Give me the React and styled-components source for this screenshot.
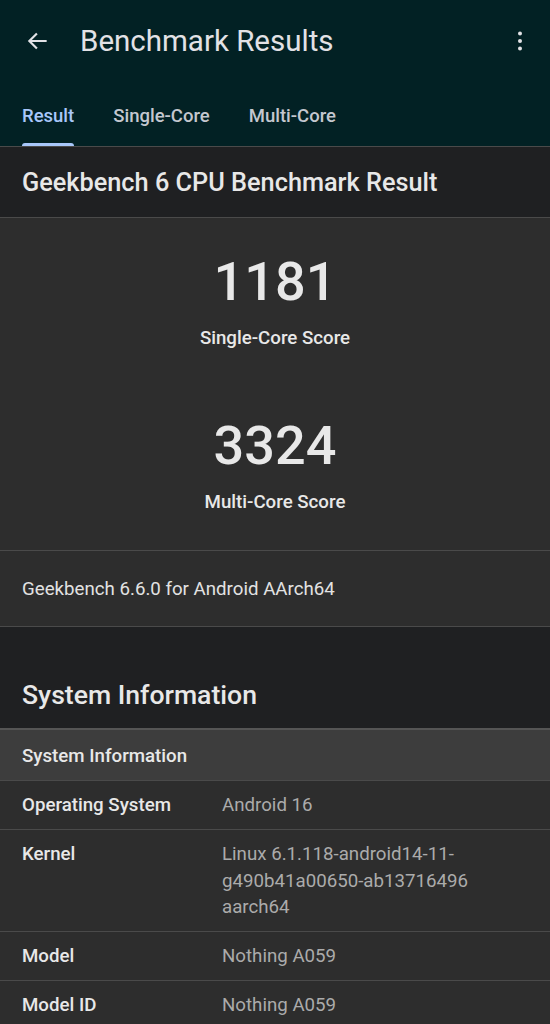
import styled, { createGlobalStyle } from 'styled-components';

const GlobalStyle = createGlobalStyle`
  body {
    margin: 0;
    background: #2d2d2d;
    font-family: Roboto, "Noto Sans", sans-serif;
    color: #e6e6e6;
  }
`;

const Page = styled.div`
  width: 550px;
  min-height: 1024px;
  background: #2d2d2d;
  overflow: hidden;
`;

const AppBar = styled.header`
  background: #022124;
  border-bottom: 1px solid #4a4a4a;
`;

const TitleRow = styled.div`
  height: 82px;
  display: flex;
  align-items: center;
  padding: 0 14px 0 22px;
`;

const IconButton = styled.button`
  background: none;
  border: none;
  padding: 0;
  display: flex;
  align-items: center;
  justify-content: center;
  width: 32px;
  height: 32px;
  color: #e2e2e6;
`;

const Title = styled.h1`
  flex: 1;
  margin: 0 0 0 26px;
  font-size: 29.5px;
  font-weight: 400;
  color: #e2e2e6;
`;

const Tabs = styled.nav`
  height: 64px;
  display: flex;
  gap: 39px;
  padding: 0 22px;
`;

const Tab = styled.div`
  position: relative;
  display: flex;
  align-items: center;
  padding-top: 4px;
  font-size: 18.5px;
  font-weight: 500;
  color: ${(p) => (p.$active ? '#a8c7fa' : '#c4c7cf')};

  &::after {
    content: '';
    display: ${(p) => (p.$active ? 'block' : 'none')};
    position: absolute;
    left: 0;
    right: 0;
    bottom: 0;
    height: 3px;
    border-radius: 3px 3px 0 0;
    background: #a8c7fa;
  }
`;

const SectionTitle = styled.h2`
  margin: 0;
  background: #1f2022;
  border-bottom: 1px solid #4a4a4a;
  height: 70px;
  display: flex;
  align-items: center;
  padding: 0 22px;
  font-size: ${(p) => p.$size || 25.3}px;
  font-weight: 500;
  color: #e8e8e8;
`;

const SpacedTitle = styled(SectionTitle)`
  height: 103px;
  align-items: flex-end;
  padding-bottom: 18px;
  box-sizing: border-box;
  border-bottom: 2px solid #555;
`;

const Scores = styled.div`
  display: flex;
  flex-direction: column;
  align-items: center;
  padding: 30px 0 37px;
  gap: 63px;
  border-bottom: 1px solid #4a4a4a;
`;

const Score = styled.div`
  display: flex;
  flex-direction: column;
  align-items: center;
`;

const ScoreValue = styled.div`
  font-size: 54px;
  font-weight: 500;
  line-height: 68px;
  color: #e8e8e8;
`;

const ScoreLabel = styled.div`
  font-size: 18.7px;
  font-weight: 500;
  margin-top: 11px;
  color: #e8e8e8;
`;

const Version = styled.div`
  height: 75px;
  display: flex;
  align-items: center;
  padding: 0 22px;
  font-size: 18.7px;
  color: #e2e2e2;
  border-bottom: 1px solid #4a4a4a;
  background: #2d2d2d;
`;

const Table = styled.div`
  background: #2d2d2d;
`;

const TableHead = styled.div`
  height: 49px;
  display: flex;
  align-items: center;
  padding: 1px 22px 0;
  background: #3d3d3d;
  font-size: 18.7px;
  font-weight: 500;
  color: #e8e8e8;
  border-bottom: 1px solid #4a4a4a;
`;

const Row = styled.div`
  display: grid;
  grid-template-columns: 200px 1fr;
  padding: 11px 22px 10px;
  min-height: 27px;
  border-bottom: 1px solid #4a4a4a;
  font-size: 18.7px;
  line-height: 26.5px;
`;

const Key = styled.div`
  font-weight: 500;
  color: #e8e8e8;
`;

const Value = styled.div`
  color: #ababab;
  width: 270px;
  word-break: break-word;
`;

const BackIcon = () => (
  <svg width="26" height="26" viewBox="0 0 24 24" fill="none">
    <path d="M20 12H4.5M11 5l-7 7 7 7" stroke="currentColor" strokeWidth="2" />
  </svg>
);

const MoreIcon = () => (
  <svg width="24" height="24" viewBox="0 0 24 24" fill="currentColor">
    <circle cx="12" cy="4.5" r="2" />
    <circle cx="12" cy="12" r="2" />
    <circle cx="12" cy="19.5" r="2" />
  </svg>
);

const info = [
  ['Operating System', 'Android 16'],
  ['Kernel', 'Linux 6.1.118-android14-11-\u200bg490b41a00650-ab13716496 aarch64'],
  ['Model', 'Nothing A059'],
  ['Model ID', 'Nothing A059'],
];

export default function App() {
  return (
    <Page>
      <GlobalStyle />
      <AppBar>
        <TitleRow>
          <IconButton>
            <BackIcon />
          </IconButton>
          <Title>Benchmark Results</Title>
          <IconButton>
            <MoreIcon />
          </IconButton>
        </TitleRow>
        <Tabs>
          <Tab $active>Result</Tab>
          <Tab>Single-Core</Tab>
          <Tab>Multi-Core</Tab>
        </Tabs>
      </AppBar>
      <SectionTitle>Geekbench 6 CPU Benchmark Result</SectionTitle>
      <Scores>
        <Score>
          <ScoreValue>1181</ScoreValue>
          <ScoreLabel>Single-Core Score</ScoreLabel>
        </Score>
        <Score>
          <ScoreValue>3324</ScoreValue>
          <ScoreLabel>Multi-Core Score</ScoreLabel>
        </Score>
      </Scores>
      <Version>Geekbench 6.6.0 for Android AArch64</Version>
      <SpacedTitle $size={26.6}>System Information</SpacedTitle>
      <Table>
        <TableHead>System Information</TableHead>
        {info.map(([k, v]) => (
          <Row key={k}>
            <Key>{k}</Key>
            <Value>{v}</Value>
          </Row>
        ))}
      </Table>
    </Page>
  );
}
